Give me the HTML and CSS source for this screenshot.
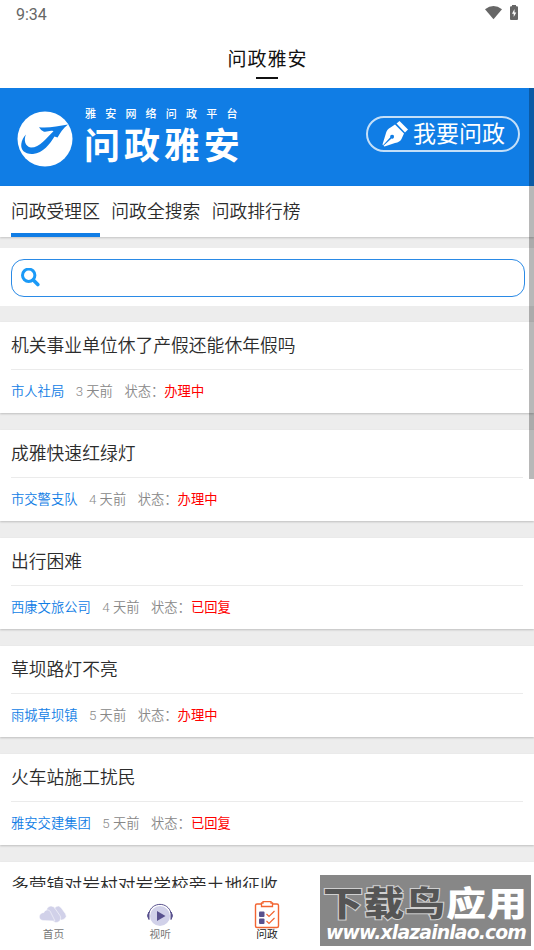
FILE: index.html
```html
<!DOCTYPE html>
<html lang="zh-CN">
<head>
<meta charset="utf-8">
<title>问政雅安</title>
<link rel="stylesheet" href="styles.css">
</head>
<body>
<div class="app">
  <div class="status">
    <span>9:34</span>
    <svg class="status-icons" width="36" height="18" viewBox="0 0 36 18"><path d="M0 4.200Q8.500 -2 17 4.200L8.500 14.200Z" fill="#666"/><path d="M27 1.200V0H31V1.200H32Q33 1.200 33 2.200V14Q33 15 32 15H26Q25 15 25 14V2.200Q25 1.200 26 1.200Z" fill="#666"/><path d="M29.500 4L27 8.700H28.700V12L31.300 7.400H29.500Z" fill="#fff"/></svg>
  </div>
  <header class="header"><h1>问政雅安</h1></header>
  <main class="content">
    <section class="banner">
      <svg class="logo" width="56" height="56" viewBox="0 0 56 56"><circle cx="28" cy="28" r="27.500" fill="#fff"/><path d="M22 16.200C31 17.500 41 15 51 13.500C46 17.500 43 22 40.500 26.500L37.500 25.500C33 33 26 42 16 43C8 43.500 3.500 39 4.300 33C4.800 29 6.500 26 9 23.500C6.500 29 8 35.500 14 36.500C23 36.500 29 27 36.500 20.200C33 18.700 30 21.500 26.500 20.500Q24 19.500 22 16.200Z" fill="#107de5"/></svg>
      <div class="brand"><div class="slogan">雅安网络问政平台</div><div class="brand-name">问政雅安</div></div>
      <div class="ask"><svg width="27" height="27" viewBox="0 0 27 27" fill="#fff"><path d="M14.500 2.500L17.500 0L26 8.500L23 11.500Z"/><path fill-rule="evenodd" d="M13 3.500L22 12.500L19.500 18Q18 21 13 22L2.500 25.500L1.500 24.800L9.500 17.500A1.900 1.900 0 1 0 8.300 16.200L1 24.200L.5 23.500L4 12Q5 8 8.500 6.500Z"/></svg><span>我要问政</span></div>
    </section>
    <nav class="tabs"><span class="tab active">问政受理区</span><span class="tab">问政全搜索</span><span class="tab">问政排行榜</span></nav>
    <section class="search"><div class="search-box"><svg width="19" height="19" viewBox="0 0 19 19" fill="none" stroke="#1b9af7"><circle cx="7.700" cy="7.300" r="6.200" stroke-width="3"/><path d="M12.300 12L16.800 16.500" stroke-width="3.600" stroke-linecap="round"/></svg></div></section>
    <article class="card"><h2>机关事业单位休了产假还能休年假吗</h2><p class="meta"><b>市人社局</b><span>3 天前</span><span>状态：<i>办理中</i></span></p></article>
    <article class="card"><h2>成雅快速红绿灯</h2><p class="meta"><b>市交警支队</b><span>4 天前</span><span>状态：<i>办理中</i></span></p></article>
    <article class="card"><h2>出行困难</h2><p class="meta"><b>西康文旅公司</b><span>4 天前</span><span>状态：<i>已回复</i></span></p></article>
    <article class="card"><h2>草坝路灯不亮</h2><p class="meta"><b>雨城草坝镇</b><span>5 天前</span><span>状态：<i>办理中</i></span></p></article>
    <article class="card"><h2>火车站施工扰民</h2><p class="meta"><b>雅安交建集团</b><span>5 天前</span><span>状态：<i>已回复</i></span></p></article>
    <article class="card"><h2>多营镇对岩村对岩学校旁土地征收</h2></article>
    <div class="scrollbar"></div>
  </main>
  <footer class="bottom">
    <div class="item"><svg width="30" height="30" viewBox="0 0 30 30" fill="#d1d1e9"><g stroke="#fff" stroke-width=".5"><rect x="18" y="5.500" width="8" height="15" rx="4" transform="rotate(-36 22 13)"/><rect x="11" y="5" width="9" height="18" rx="4.500" transform="rotate(-35 16 14)"/><path d="M5 20.500C0 20 0 13 6 12.500C7 9 12 9 13 13L17 21Z"/></g></svg><span>首页</span></div>
    <div class="item"><svg width="30" height="30" viewBox="0 0 30 30"><circle cx="15" cy="16" r="10" fill="#d1d1e9"/><path d="M4 13C7 1.500 23 1.500 26 13" fill="none" stroke="#58518e" stroke-width="1"/><path d="M4 12Q1 15.500 4 19.500ZM26 12Q29 15.500 26 19.500Z" fill="#58518e" stroke="#58518e"/><path d="M12 11L20.500 16L12 21Z" fill="#58518e"/></svg><span>视听</span></div>
    <div class="item current"><svg width="30" height="30" viewBox="0 0 30 30" fill="none" stroke="#f26532"><rect x="3.500" y="4" width="23" height="23.500" rx="1.500" stroke-width="1.400"/><path d="M9.500 6.500V3H11V1.700H19V3H20.500V6.500Z" fill="#fff" stroke-width="1.300"/><rect x="7" y="11.500" width="5.500" height="5.500" rx="1" fill="#58518e" stroke="none"/><rect x="7" y="18.500" width="5.500" height="5.500" rx="1" fill="#58518e" stroke="none"/><path d="M14.500 14L17 16.500L22.500 11M14.500 21L17 23.500L22.500 18" stroke-width="1.200"/></svg><span>问政</span></div>
    <div class="item"></div>
    <div class="item"></div>
  </footer>
  <div class="watermark">
    <div class="wm-name"><span>下载鸟</span>应用</div>
    <div class="wm-url">www.xlazainlao.com</div>
  </div>
</div>
</body>
</html>
```
FILE: styles.css
```css
* { box-sizing: border-box; margin: 0; padding: 0; }
body { font-family: Roboto, "Noto Sans CJK SC", sans-serif; background: #fff; color: #2c2c2c; overflow: hidden; }
.app { position: relative; width: 534px; height: 950px; display: flex; flex-direction: column; overflow: hidden; }
.status { height: 30px; padding: 5px 13px 0 16px; display: flex; justify-content: space-between; color: #666; font-size: 16px; line-height: 19px; flex: none; }
.header { height: 58px; flex: none; display: flex; flex-direction: column; align-items: center; padding-top: 16px; }
.header h1 { font-size: 19px; line-height: 28px; font-weight: 400; letter-spacing: 1px; color: #111; padding-left: 1px; }
.header::after { content: ""; width: 22px; height: 2px; background: #111; margin-top: 3px; }
.content { position: relative; height: 800px; flex: none; background: #ededed; overflow: hidden; }
.banner { height: 98px; background: #107de5; display: flex; align-items: flex-start; color: #fff; padding-left: 17px; }
.logo { margin-top: 23px; flex: none; }
.brand { margin: 19px 0 0 12px; width: 180px; white-space: nowrap; }
.slogan { font-size: 11px; line-height: 16px; letter-spacing: 9.200px; font-weight: 500; }
.brand-name { font-size: 36px; line-height: 44px; letter-spacing: 3.900px; font-weight: 700; margin-top: 2px; margin-left: -1px; }
.ask { margin: 28px 14px 0 auto; width: 154px; height: 36px; border: 2px solid #c4dff8; border-radius: 18px; display: flex; align-items: center; padding-left: 14px; font-size: 23px; line-height: 34px; white-space: nowrap; }
.ask span { margin: 2px 0 0 4px; }
.tabs { height: 51px; background: #fff; display: flex; gap: 11.400px; padding-left: 11px; position: relative; box-shadow: 0 1px 2px rgba(0,0,0,.18); }
.tab { height: 51px; font-size: 17.800px; line-height: 52px; font-weight: 350; }
.tab.active { border-bottom: 4px solid #107de5; }
.search { height: 58px; margin-top: 11px; background: #fff; padding: 11px 9px 0 11px; }
.search-box { height: 38px; border: 1.500px solid #2a8ae6; border-radius: 13px; padding: 8px 9px; }
.search-box svg { display: block; }
.card { height: 91px; margin-top: 17px; background: #fff; padding: 0 11px; box-shadow: 0 1px 2px rgba(0,0,0,.2); }
.search + .card { margin-top: 16px; }
.card h2 { height: 48px; font-size: 17.800px; line-height: 47px; font-weight: 350; border-bottom: 1px solid #ebebeb; white-space: nowrap; }
.meta { display: flex; gap: 11.500px; font-size: 13.300px; line-height: 43px; color: #888; font-weight: 350; }
.meta b { color: #107de5; font-weight: 350; }
.meta i { color: #f00; font-style: normal; font-weight: 400; }
.scrollbar { position: absolute; right: 0; top: 0; width: 5px; height: 391px; background: rgba(0,0,0,.28); }
.bottom { height: 62px; flex: none; background: #fff; display: flex; }
.item { flex: 1; display: flex; flex-direction: column; align-items: center; padding-top: 12px; font-size: 10.700px; line-height: 14px; color: #777; }
.item svg { flex: none; margin-bottom: -2px; }
.current { color: #222; }
.watermark { position: absolute; left: 320px; top: 875px; width: 211px; height: 71px; background: #878787; color: #fff; white-space: nowrap; }
.wm-name { height: 48px; padding: 3px 0 0 3px; font-size: 40px; line-height: 48px; font-weight: 900; letter-spacing: 1px; transform: scaleY(.84); transform-origin: 0 100%; }
.wm-name span { color: #555; -webkit-text-stroke: 2.500px #d0d0d0; paint-order: stroke fill; }
.wm-url { height: 23px; padding-left: 6px; font: italic 700 18.800px/20px "DejaVu Sans", sans-serif; letter-spacing: -.85px; }
```
